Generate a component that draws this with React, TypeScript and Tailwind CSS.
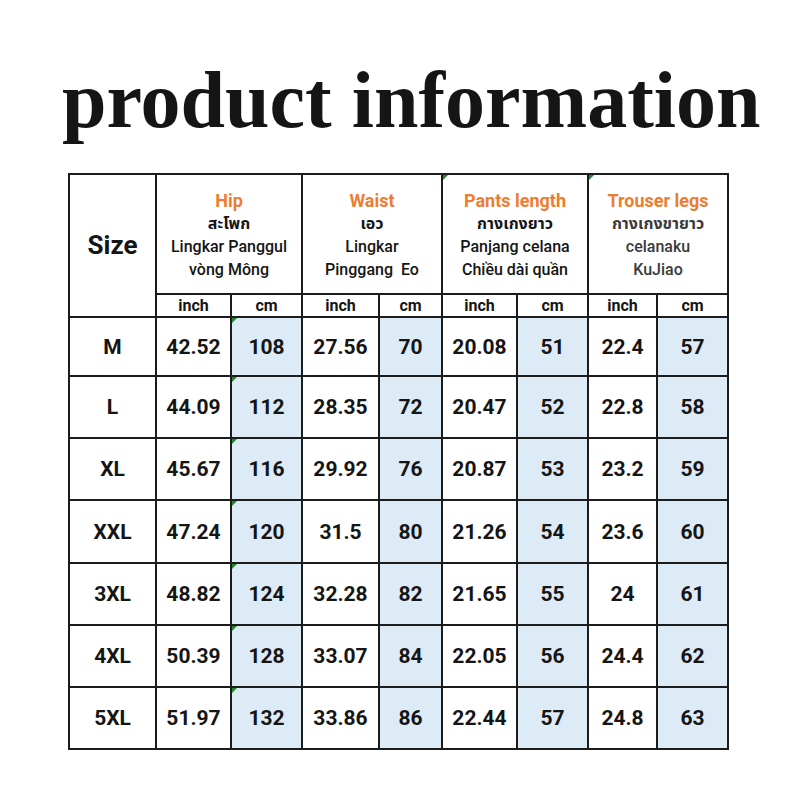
import React from "react";

type Row = {
  size: string;
  vals: string[];
};

const ROWS: Row[] = [
  { size: "M", vals: ["42.52", "108", "27.56", "70", "20.08", "51", "22.4", "57"] },
  { size: "L", vals: ["44.09", "112", "28.35", "72", "20.47", "52", "22.8", "58"] },
  { size: "XL", vals: ["45.67", "116", "29.92", "76", "20.87", "53", "23.2", "59"] },
  { size: "XXL", vals: ["47.24", "120", "31.5", "80", "21.26", "54", "23.6", "60"] },
  { size: "3XL", vals: ["48.82", "124", "32.28", "82", "21.65", "55", "24", "61"] },
  { size: "4XL", vals: ["50.39", "128", "33.07", "84", "22.05", "56", "24.4", "62"] },
  { size: "5XL", vals: ["51.97", "132", "33.86", "86", "22.44", "57", "24.8", "63"] },
];

const HEADERS = [
  { title: "Hip", lines: ["สะโพก", "Lingkar Panggul", "vòng Mông"], mark: false, soft: false },
  { title: "Waist", lines: ["เอว", "Lingkar", "Pinggang  Eo"], mark: false, soft: false },
  { title: "Pants length", lines: ["กางเกงยาว", "Panjang celana", "Chiều dài quần"], mark: true, soft: false },
  { title: "Trouser legs", lines: ["กางเกงขายาว", "celanaku", "KuJiao"], mark: true, soft: true },
];

const FONT = "font-['Roboto','Noto_Sans','Noto_Sans_Thai',sans-serif]";

function Mark() {
  return (
    <span className="absolute left-0 top-0 h-0 w-0 border-r-[5px] border-t-[5px] border-r-transparent border-t-[#1f8a2c]" />
  );
}

export default function App() {
  return (
    <div className={`h-[800px] w-[800px] bg-white text-[#151515] ${FONT}`}>
      <div className="h-[173px] pl-[62px] pt-[60px]">
        <h1 className="whitespace-nowrap font-['Liberation_Serif','Times_New_Roman',serif] text-[80px] font-bold leading-none text-[#151515]">
          product information
        </h1>
      </div>

      <div className="ml-[68px] grid w-[661px] grid-cols-[85px_73px_69px_75px_61px_73px_69px_67px_69px] grid-rows-[118px_21px_57px_60px_60px_61px_60px_60px_60px] gap-[2px] bg-[#1c1c1c] p-[2px]">
        <div className="row-span-2 flex items-center justify-center bg-white text-[26px] font-bold">
          Size
        </div>
        {HEADERS.map((h) => (
          <div
            key={h.title}
            className="relative col-span-2 flex flex-col items-center justify-center bg-white pt-[2px] text-center"
          >
            {h.mark && <Mark />}
            <div className="text-[18px] font-bold leading-[23px] text-[#ed7d31]">{h.title}</div>
            {h.lines.map((l, i) => (
              <div
                key={l}
                className={`whitespace-pre text-[16px] leading-[23px] ${
                  i === 0 ? "font-bold" : "font-medium"
                } ${h.soft ? "text-[#3a3a3a]" : "text-[#151515]"}`}
              >
                {l}
              </div>
            ))}
          </div>
        ))}

        {HEADERS.map((h) => (
          <React.Fragment key={h.title + "-unit"}>
            <div className="flex items-center justify-center bg-white pt-[1px] text-[16px] font-bold leading-none">
              inch
            </div>
            <div className="flex items-center justify-center bg-white pt-[1px] text-[16px] font-bold leading-none">
              cm
            </div>
          </React.Fragment>
        ))}

        {ROWS.map((r) => (
          <React.Fragment key={r.size}>
            <div className="flex items-center justify-center bg-white pt-[2px] text-[21px] font-bold">
              {r.size}
            </div>
            {r.vals.map((v, i) => {
              const cm = i % 2 === 1;
              return (
                <div
                  key={i}
                  className={`relative flex items-center justify-center pt-[2px] text-[21px] font-bold ${
                    cm ? "bg-[#ddebf7]" : "bg-white"
                  }`}
                >
                  {i === 1 && <Mark />}
                  {v}
                </div>
              );
            })}
          </React.Fragment>
        ))}
      </div>
    </div>
  );
}
